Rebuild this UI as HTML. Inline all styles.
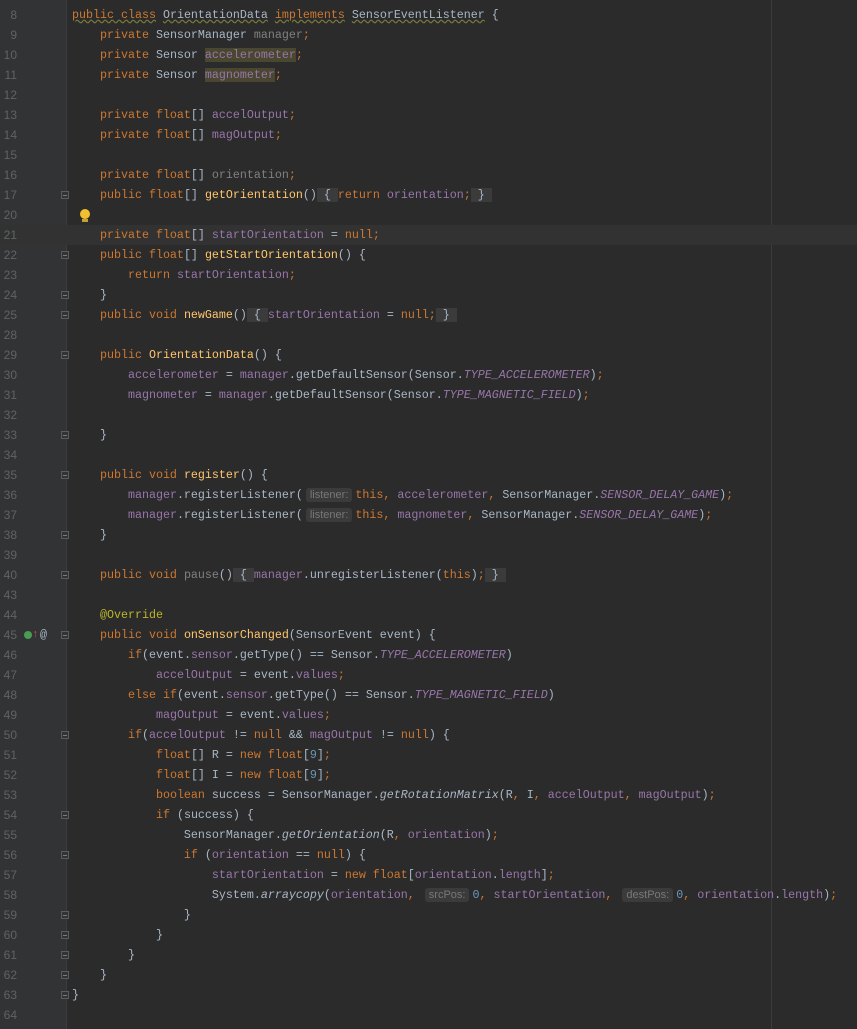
<!DOCTYPE html>
<html><head><meta charset="utf-8"><style>
body{margin:0;width:857px;height:1029px;background:#2b2b2b;overflow:hidden;position:relative;font-family:"Liberation Mono",monospace;font-size:11.67px;color:#a9b7c6}
#gut{position:absolute;left:0;top:0;width:66px;height:1029px;background:#313335}
#sep{position:absolute;left:66px;top:0;width:1px;height:1029px;background:#3a3c3e}
#rm{position:absolute;left:771px;top:0;width:1px;height:1029px;background:#3c3c3c}
.r{position:absolute;left:0;width:857px;height:20px;line-height:20px}
.ln{position:absolute;left:0;width:17px;text-align:right;color:#606366;font-family:"Liberation Sans",sans-serif;font-size:12px}
.c{position:absolute;left:72px;white-space:pre}
.k{color:#cc7832}.f{color:#9876aa}.g{color:#808080}.m{color:#ffc66d}.s{color:#9876aa;font-style:italic}.n{color:#6897bb}.a{color:#bbb529}
.h{background:#3b3b3b;color:#787878;font-family:"Liberation Sans",sans-serif;font-size:11px;border-radius:3px;padding:1px 4px;margin:0 3px}
.b{background:#3b3b3b}
.hl{background:#49472f}
.cur{background:#323232}
.fd{position:absolute;left:61px;width:8px;height:8px;border:1px solid #5a5d5f;box-sizing:border-box;top:6px;background:#313335}
.fd:after{content:"";position:absolute;left:1px;top:3px;width:4px;height:1px;background:#7a7d80}
.sq{text-decoration:underline wavy #7a7a3a}
</style></head><body>
<div id="gut"></div><div id="sep"></div><div id="rm"></div>
<div class="r" style="top:5px"><span class="ln">8</span><span class="c"><span class="k sq">public class</span> <span class="sq">OrientationData</span> <span class="k sq">implements</span> <span class="sq">SensorEventListener</span> {</span></div>
<div class="r" style="top:25px"><span class="ln">9</span><span class="c">    <span class="k">private</span> SensorManager <span class="g">manager</span><span class="k">;</span></span></div>
<div class="r" style="top:45px"><span class="ln">10</span><span class="c">    <span class="k">private</span> Sensor <span class="f hl">accelerometer</span><span class="k">;</span></span></div>
<div class="r" style="top:65px"><span class="ln">11</span><span class="c">    <span class="k">private</span> Sensor <span class="f hl">magnometer</span><span class="k">;</span></span></div>
<div class="r" style="top:85px"><span class="ln">12</span></div>
<div class="r" style="top:105px"><span class="ln">13</span><span class="c">    <span class="k">private float</span>[] <span class="f">accelOutput</span><span class="k">;</span></span></div>
<div class="r" style="top:125px"><span class="ln">14</span><span class="c">    <span class="k">private float</span>[] <span class="f">magOutput</span><span class="k">;</span></span></div>
<div class="r" style="top:145px"><span class="ln">15</span></div>
<div class="r" style="top:165px"><span class="ln">16</span><span class="c">    <span class="k">private float</span>[] <span class="g">orientation</span><span class="k">;</span></span></div>
<div class="r" style="top:185px"><span class="ln">17</span><span class="fd"></span><span class="c">    <span class="k">public float</span>[] <span class="m">getOrientation</span>()<span class="b"> { </span><span class="k">return </span><span class="f">orientation</span><span class="k">;</span><span class="b"> } </span></span></div>
<div class="r" style="top:205px"><span class="ln">20</span><span style="position:absolute;left:80px;top:4px;width:10px;height:10px;border-radius:50%;background:#f0c030"></span><span style="position:absolute;left:82px;top:14px;width:6px;height:3px;background:#c9a030"></span></div>
<div class="r cur" style="top:225px"><span class="ln">21</span><span class="c">    <span class="k">private float</span>[] <span class="f">startOrientation</span> = <span class="k">null;</span></span></div>
<div class="r" style="top:245px"><span class="ln">22</span><span class="fd"></span><span class="c">    <span class="k">public float</span>[] <span class="m">getStartOrientation</span>() {</span></div>
<div class="r" style="top:265px"><span class="ln">23</span><span class="c">        <span class="k">return </span><span class="f">startOrientation</span><span class="k">;</span></span></div>
<div class="r" style="top:285px"><span class="ln">24</span><span class="fd"></span><span class="c">    }</span></div>
<div class="r" style="top:305px"><span class="ln">25</span><span class="fd"></span><span class="c">    <span class="k">public void</span> <span class="m">newGame</span>()<span class="b"> { </span><span class="f">startOrientation</span> = <span class="k">null;</span><span class="b"> } </span></span></div>
<div class="r" style="top:325px"><span class="ln">28</span></div>
<div class="r" style="top:345px"><span class="ln">29</span><span class="fd"></span><span class="c">    <span class="k">public</span> <span class="m">OrientationData</span>() {</span></div>
<div class="r" style="top:365px"><span class="ln">30</span><span class="c">        <span class="f">accelerometer</span> = <span class="f">manager</span>.getDefaultSensor(Sensor.<span class="s">TYPE_ACCELEROMETER</span>)<span class="k">;</span></span></div>
<div class="r" style="top:385px"><span class="ln">31</span><span class="c">        <span class="f">magnometer</span> = <span class="f">manager</span>.getDefaultSensor(Sensor.<span class="s">TYPE_MAGNETIC_FIELD</span>)<span class="k">;</span></span></div>
<div class="r" style="top:405px"><span class="ln">32</span></div>
<div class="r" style="top:425px"><span class="ln">33</span><span class="fd"></span><span class="c">    }</span></div>
<div class="r" style="top:445px"><span class="ln">34</span></div>
<div class="r" style="top:465px"><span class="ln">35</span><span class="fd"></span><span class="c">    <span class="k">public void</span> <span class="m">register</span>() {</span></div>
<div class="r" style="top:485px"><span class="ln">36</span><span class="c">        <span class="f">manager</span>.registerListener(<span class="h">listener:</span><span class="k">this, </span><span class="f">accelerometer</span><span class="k">, </span>SensorManager.<span class="s">SENSOR_DELAY_GAME</span>)<span class="k">;</span></span></div>
<div class="r" style="top:505px"><span class="ln">37</span><span class="c">        <span class="f">manager</span>.registerListener(<span class="h">listener:</span><span class="k">this, </span><span class="f">magnometer</span><span class="k">, </span>SensorManager.<span class="s">SENSOR_DELAY_GAME</span>)<span class="k">;</span></span></div>
<div class="r" style="top:525px"><span class="ln">38</span><span class="fd"></span><span class="c">    }</span></div>
<div class="r" style="top:545px"><span class="ln">39</span></div>
<div class="r" style="top:565px"><span class="ln">40</span><span class="fd"></span><span class="c">    <span class="k">public void</span> <span class="g">pause</span>()<span class="b"> { </span><span class="f">manager</span>.unregisterListener(<span class="k">this</span>)<span class="k">;</span><span class="b"> } </span></span></div>
<div class="r" style="top:585px"><span class="ln">43</span></div>
<div class="r" style="top:605px"><span class="ln">44</span><span class="c">    <span class="a">@Override</span></span></div>
<div class="r" style="top:625px"><span class="ln">45</span><span style="position:absolute;left:24px;top:6px;width:8px;height:8px;border-radius:50%;background:#499c54"></span><span style="position:absolute;left:32px;top:0;color:#c75450;font-size:11px">↑</span><span style="position:absolute;left:40px;color:#a9b7c6">@</span><span class="fd"></span><span class="c">    <span class="k">public void</span> <span class="m">onSensorChanged</span>(SensorEvent event) {</span></div>
<div class="r" style="top:645px"><span class="ln">46</span><span class="c">        <span class="k">if</span>(event.<span class="f">sensor</span>.getType() == Sensor.<span class="s">TYPE_ACCELEROMETER</span>)</span></div>
<div class="r" style="top:665px"><span class="ln">47</span><span class="c">            <span class="f">accelOutput</span> = event.<span class="f">values</span><span class="k">;</span></span></div>
<div class="r" style="top:685px"><span class="ln">48</span><span class="c">        <span class="k">else if</span>(event.<span class="f">sensor</span>.getType() == Sensor.<span class="s">TYPE_MAGNETIC_FIELD</span>)</span></div>
<div class="r" style="top:705px"><span class="ln">49</span><span class="c">            <span class="f">magOutput</span> = event.<span class="f">values</span><span class="k">;</span></span></div>
<div class="r" style="top:725px"><span class="ln">50</span><span class="fd"></span><span class="c">        <span class="k">if</span>(<span class="f">accelOutput</span> != <span class="k">null</span> &amp;&amp; <span class="f">magOutput</span> != <span class="k">null</span>) {</span></div>
<div class="r" style="top:745px"><span class="ln">51</span><span class="c">            <span class="k">float</span>[] R = <span class="k">new float</span>[<span class="n">9</span>]<span class="k">;</span></span></div>
<div class="r" style="top:765px"><span class="ln">52</span><span class="c">            <span class="k">float</span>[] I = <span class="k">new float</span>[<span class="n">9</span>]<span class="k">;</span></span></div>
<div class="r" style="top:785px"><span class="ln">53</span><span class="c">            <span class="k">boolean</span> success = SensorManager.<span style="font-style:italic">getRotationMatrix</span>(R<span class="k">, </span>I<span class="k">, </span><span class="f">accelOutput</span><span class="k">, </span><span class="f">magOutput</span>)<span class="k">;</span></span></div>
<div class="r" style="top:805px"><span class="ln">54</span><span class="fd"></span><span class="c">            <span class="k">if</span> (success) {</span></div>
<div class="r" style="top:825px"><span class="ln">55</span><span class="c">                SensorManager.<span style="font-style:italic">getOrientation</span>(R<span class="k">, </span><span class="f">orientation</span>)<span class="k">;</span></span></div>
<div class="r" style="top:845px"><span class="ln">56</span><span class="fd"></span><span class="c">                <span class="k">if</span> (<span class="f">orientation</span> == <span class="k">null</span>) {</span></div>
<div class="r" style="top:865px"><span class="ln">57</span><span class="c">                    <span class="f">startOrientation</span> = <span class="k">new float</span>[<span class="f">orientation</span>.<span class="f">length</span>]<span class="k">;</span></span></div>
<div class="r" style="top:885px"><span class="ln">58</span><span class="c">                    System.<span style="font-style:italic">arraycopy</span>(<span class="f">orientation</span><span class="k">, </span><span class="h">srcPos:</span><span class="n">0</span><span class="k">, </span><span class="f">startOrientation</span><span class="k">, </span><span class="h">destPos:</span><span class="n">0</span><span class="k">, </span><span class="f">orientation</span>.<span class="f">length</span>)<span class="k">;</span></span></div>
<div class="r" style="top:905px"><span class="ln">59</span><span class="fd"></span><span class="c">                }</span></div>
<div class="r" style="top:925px"><span class="ln">60</span><span class="fd"></span><span class="c">            }</span></div>
<div class="r" style="top:945px"><span class="ln">61</span><span class="fd"></span><span class="c">        }</span></div>
<div class="r" style="top:965px"><span class="ln">62</span><span class="fd"></span><span class="c">    }</span></div>
<div class="r" style="top:985px"><span class="ln">63</span><span class="fd"></span><span class="c">}</span></div>
<div class="r" style="top:1005px"><span class="ln">64</span></div>
</body></html>
